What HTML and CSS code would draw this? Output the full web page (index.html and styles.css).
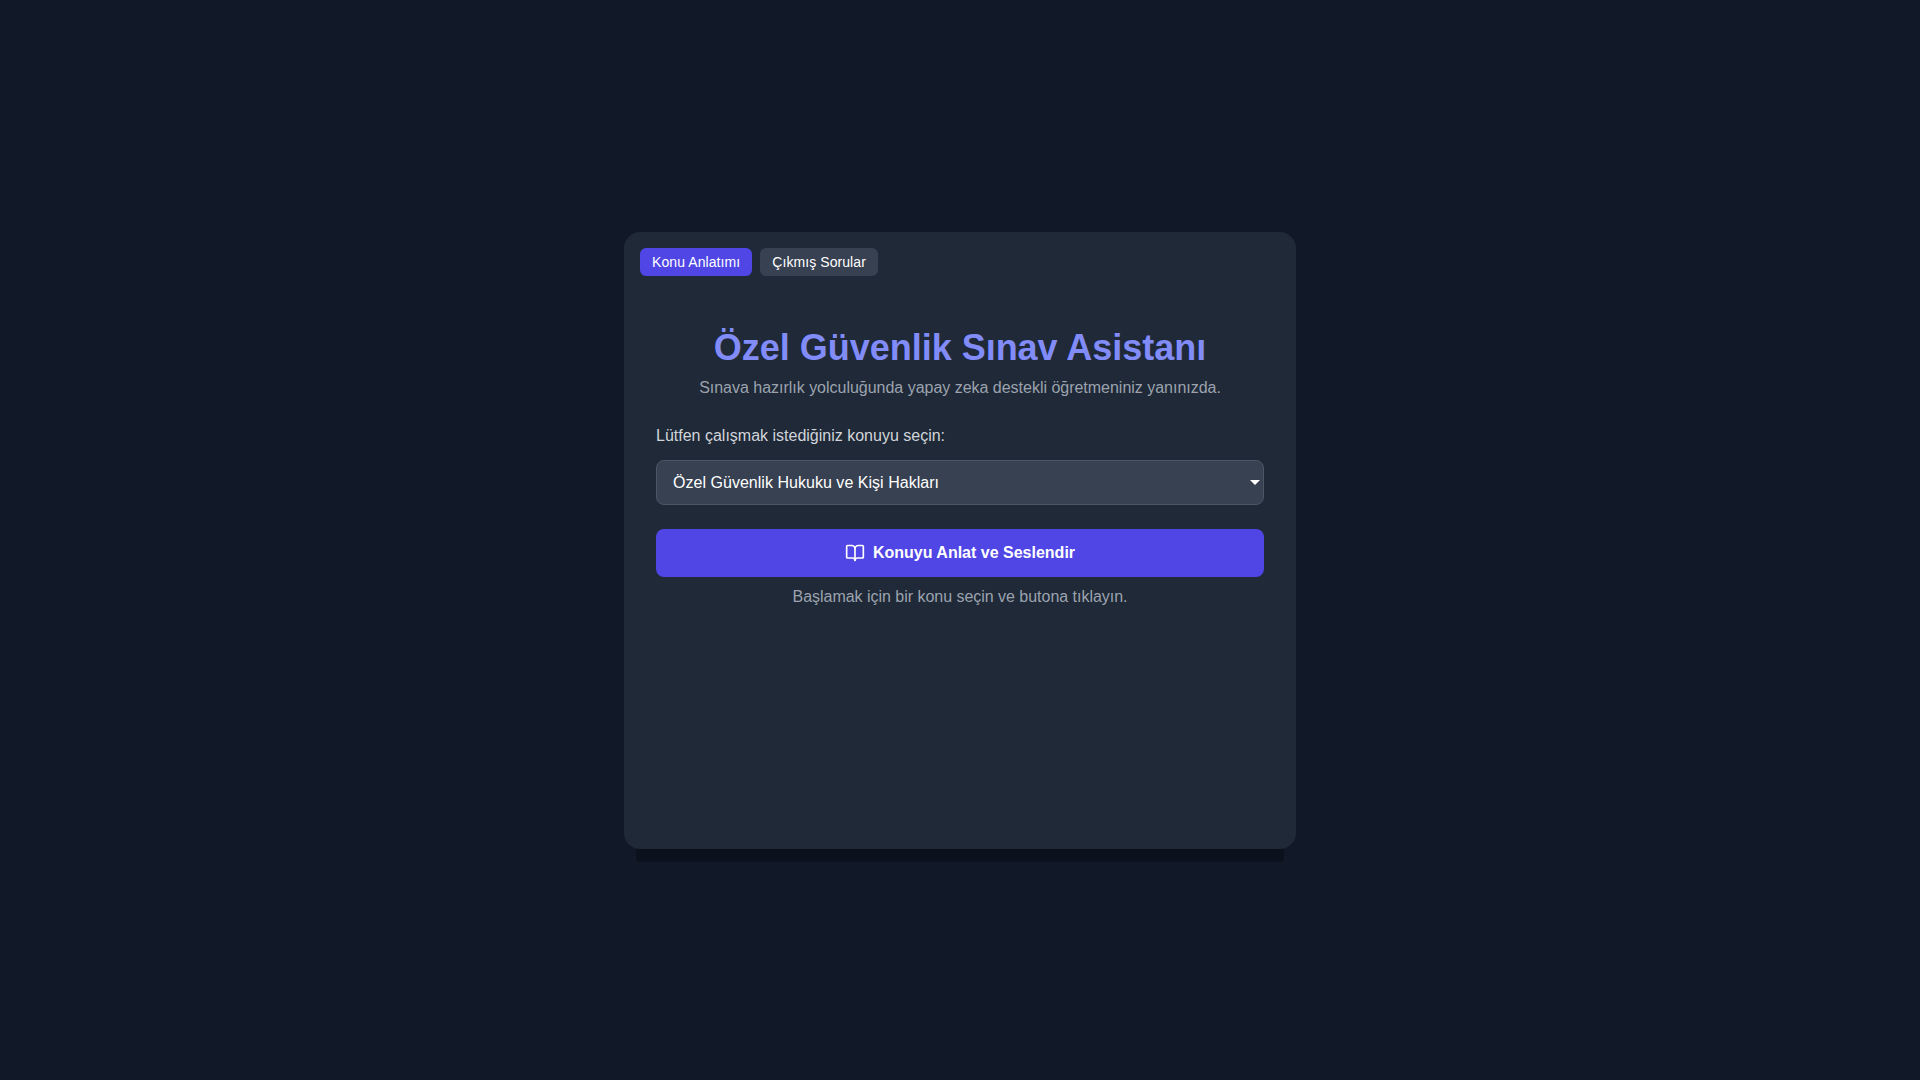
FILE: index.html
```html
<!DOCTYPE html>
<html lang="tr">
<head>
<meta charset="utf-8">
<title>Özel Güvenlik Sınav Asistanı</title>
<link rel="stylesheet" href="styles.css">
</head>
<body>
<main class="card">
  <nav class="tabs">
    <button class="tab tab-active">Konu Anlatımı</button>
    <button class="tab">Çıkmış Sorular</button>
  </nav>
  <header class="head">
    <h1>Özel Güvenlik Sınav Asistanı</h1>
    <p class="sub">Sınava hazırlık yolculuğunda yapay zeka destekli öğretmeniniz yanınızda.</p>
  </header>
  <label class="label" for="topic">Lütfen çalışmak istediğiniz konuyu seçin:</label>
  <div class="select" id="topic">Özel Güvenlik Hukuku ve Kişi Hakları<span class="caret"></span></div>
  <button class="cta">
    <svg width="20" height="20" viewBox="0 0 24 24" fill="none" stroke="currentColor" stroke-width="2" stroke-linecap="round" stroke-linejoin="round"><path d="M12 7v14"/><path d="M3 18a1 1 0 0 1-1-1V4a1 1 0 0 1 1-1h5a4 4 0 0 1 4 4 4 4 0 0 1 4-4h5a1 1 0 0 1 1 1v13a1 1 0 0 1-1 1h-6a3 3 0 0 0-3 3 3 3 0 0 0-3-3z"/></svg>
    Konuyu Anlat ve Seslendir
  </button>
  <p class="hint">Başlamak için bir konu seçin ve butona tıklayın.</p>
</main>
</body>
</html>
```
FILE: styles.css
```css
* { box-sizing: border-box; }
html, body { height: 100%; }
body {
  margin: 0;
  background: #111827;
  font-family: Arial, sans-serif;
  display: flex;
  align-items: center;
  justify-content: center;
  color: #fff;
}
.card {
  width: 672px;
  height: 617px;
  background: #1f2937;
  border-radius: 16px;
  padding: 16px 32px 32px;
  box-shadow: 0 25px 0 -12px rgba(0,0,0,.25);
  display: flex;
  flex-direction: column;
}
.tabs { display: flex; gap: 8px; margin: 0 -16px; }
.tab {
  font: 14px/20px Arial, sans-serif;
  letter-spacing: 0.08px;
  color: #fff;
  background: #374151;
  border: 0;
  border-radius: 6px;
  padding: 4px 12px;
  height: 28px;
}
.tab-active { background: #4f46e5; }
.head { text-align: center; margin-top: 52px; }
h1 { margin: 0; font-size: 36px; line-height: 40px; font-weight: 700; color: #818cf8; letter-spacing: -0.02px; }
.sub { margin: 8px 0 0; font-size: 16px; line-height: 24px; color: #9ca3af; letter-spacing: -0.017px; }
.label { margin-top: 24px; font-size: 16px; line-height: 24px; color: #d1d5db; }
.select {
  margin-top: 12px;
  height: 45px;
  background: #374151;
  border: 1px solid #4b5563;
  border-radius: 8px;
  padding: 0 16px;
  font-size: 16px;
  line-height: 43px;
  letter-spacing: 0.03px;
  position: relative;
}
.caret {
  position: absolute;
  right: 3px;
  top: 19px;
  border: 5px solid transparent;
  border-top-color: #fff;
  border-bottom: 0;
}
.cta {
  margin-top: 24px;
  height: 48px;
  background: #4f46e5;
  color: #fff;
  border: 0;
  border-radius: 8px;
  font: 700 16px/24px Arial, sans-serif;
  display: flex;
  align-items: center;
  justify-content: center;
  gap: 8px;
}
.hint { margin: 8px 0 0; text-align: center; font-size: 16px; line-height: 24px; color: #9ca3af; letter-spacing: -0.025px; }
```
